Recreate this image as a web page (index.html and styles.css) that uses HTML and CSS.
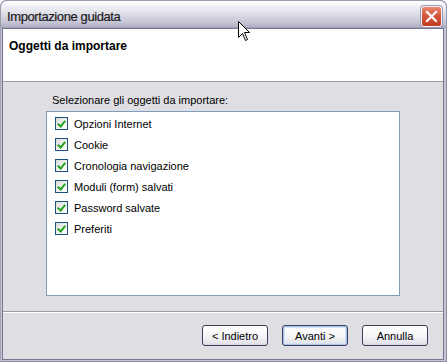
FILE: index.html
```html
<!DOCTYPE html>
<html lang="it">
<head>
    <meta charset="UTF-8">
    <title>Importazione guidata</title>
    <link rel="stylesheet" href="styles.css">
</head>
<body>
    <div class="window">
        <div class="titlebar">
            <span class="title">Importazione guidata</span>
            <div class="close-btn">
                <svg width="21" height="21" viewBox="0 0 21 21">
                    <path d="M6 6 L15 15 M15 6 L6 15" stroke="#fff" stroke-width="2.2" stroke-linecap="square"/>
                </svg>
            </div>
        </div>

        <div class="client">
            <div class="header">
                <h1>Oggetti da importare</h1>
            </div>

            <div class="content">
                <p class="label">Selezionare gli oggetti da importare:</p>
                <div class="listbox">
                    <div class="item"><span class="check"></span>Opzioni Internet</div>
                    <div class="item"><span class="check"></span>Cookie</div>
                    <div class="item"><span class="check"></span>Cronologia navigazione</div>
                    <div class="item"><span class="check"></span>Moduli (form) salvati</div>
                    <div class="item"><span class="check"></span>Password salvate</div>
                    <div class="item"><span class="check"></span>Preferiti</div>
                </div>
            </div>

            <div class="footer">
                <button class="btn">&lt; Indietro</button>
                <button class="btn default">Avanti &gt;</button>
                <button class="btn">Annulla</button>
            </div>
        </div>

        <!-- puntatore del mouse -->
        <svg class="cursor" width="13" height="21" viewBox="0 0 13 21">
            <path d="M0.5 0.5 L0.5 16.5 L4.5 12.5 L7.5 19.5 L9.5 18.5 L6.5 11.5 L11.5 11.5 Z" fill="#fff" stroke="#000" stroke-width="1"/>
        </svg>
    </div>
</body>
</html>
```

FILE: styles.css
```css
body {
    margin: 0;
    padding: 0;
    background: #fff;
    font-family: 'Liberation Sans', Arial, sans-serif;
    font-size: 11px;
    color: #000;
}

.window {
    position: relative;
    width: 447px;
    height: 362px;
    box-sizing: border-box;
    padding: 0 3px 2px 2px;
    background: #c6c6d4;
    border-radius: 7px 7px 0 0;
    box-shadow: inset 1px 0 0 #a4a4b8, inset -1px 0 0 #8a8aa0, inset 0 -1px 0 #8a8aa0;
    display: flex;
    flex-direction: column;
}

.titlebar {
    height: 28px;
    margin: 0 -3px 0 -2px;
    padding: 0 7px 0 6px;
    border-radius: 7px 7px 0 0;
    border: 1px solid #9a9ab0;
    border-bottom: none;
    box-sizing: border-box;
    background: linear-gradient(#ffffff 0%, #f0f0f5 20%, #dcdce6 50%, #c4c4d4 80%, #b0b0c4 96%, #9c9cb2 100%);
    display: flex;
    align-items: center;
    justify-content: space-between;
}

.title {
    font-size: 13px;
    letter-spacing: -0.4px;
    color: #1c1c1c;
    padding-top: 3px;
    -webkit-text-stroke: 0.2px #1c1c1c;
}

.close-btn {
    width: 21px;
    height: 21px;
    margin-top: 3px;
    margin-right: -3px;
    border-radius: 3px;
    box-sizing: border-box;
    border: 1px solid #f4f4f8;
    background: linear-gradient(#e88a72 0%, #d6573c 45%, #c23a22 100%);
    box-shadow: 0 0 0 1px #9a9ab0;
    display: flex;
}

.close-btn svg {
    margin: -1px;
}

.client {
    flex: 1;
    display: flex;
    flex-direction: column;
    border: 1px solid #76768e;
    background: #dfdfe3;
}

.header {
    height: 42px;
    background: #fff;
    border-bottom: 1px solid #9d9da6;
    padding: 10px 6px 0;
}

.header h1 {
    margin: 0;
    font-size: 12px;
    line-height: 14px;
    font-weight: bold;
}

.content {
    flex: 1;
    padding: 12px 43px 0 43px;
    border-bottom: 1px solid #9d9da6;
    box-shadow: 0 1px 0 #fff;
}

.label {
    margin: 0 0 4px 6px;
    line-height: 13px;
}

.listbox {
    height: 185px;
    box-sizing: border-box;
    border: 1px solid #7f9db9;
    background: #fff;
    padding: 1px 0;
}

.item {
    height: 21px;
    display: flex;
    align-items: center;
    padding-left: 8px;
}

.check {
    position: relative;
    width: 13px;
    height: 13px;
    box-sizing: border-box;
    border: 1px solid #1c5180;
    background: linear-gradient(135deg, #dcdcd7 0%, #f4f4f0 60%, #fff 100%);
    margin-right: 6px;
}

.check::after {
    content: '';
    position: absolute;
    left: 3px;
    top: 1px;
    width: 3px;
    height: 6px;
    border: solid #21a121;
    border-width: 0 2px 2px 0;
    transform: rotate(40deg);
}

.footer {
    height: 46px;
    margin-top: 1px;
    display: flex;
    justify-content: flex-end;
    align-items: flex-start;
    gap: 14px;
    padding: 12px 15px 0 0;
    box-sizing: border-box;
}

.btn {
    width: 66px;
    height: 21px;
    font-family: 'Liberation Sans', Arial, sans-serif;
    font-size: 11px;
    color: #000;
    border: 1px solid #3d3d5c;
    border-radius: 3px;
    background: linear-gradient(#ffffff 0%, #f6f6f8 50%, #e4e4ea 90%, #d4d4dc 100%);
    padding: 0;
}

.btn.default {
    box-shadow: inset 0 0 0 1px #a8c2ec, inset 0 0 0 2px #d4e2f8;
}

.cursor {
    position: absolute;
    left: 238px;
    top: 21px;
}
```
